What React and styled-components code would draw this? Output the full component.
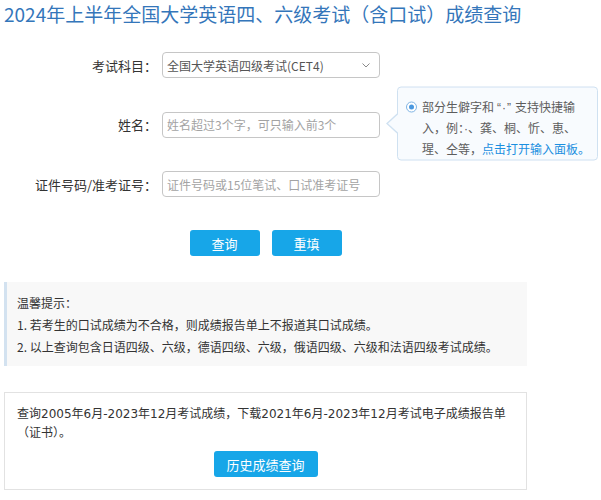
import React from "react";
import styled, { createGlobalStyle } from "styled-components";

const GlobalStyle = createGlobalStyle`
    body {
        margin: 0;
        background: #ffffff;
        font-family: "Noto Sans CJK SC", "Liberation Sans", sans-serif;
        color: #333333;
    }
`

const Page = styled.div`
    width: 523px;
    margin-left: 4px;
`

const Title = styled.h1`
    margin: 0;
    font-size: 19px;
    line-height: 28px;
    font-weight: normal;
    color: #3476ba;
    white-space: nowrap;
`

const Form = styled.div`
    display: flex;
    flex-direction: column;
    gap: 33.5px;
    margin-top: 24px;
`

const Row = styled.div`
    position: relative;
    display: flex;
    align-items: center;
    height: 26px;
`

const Label = styled.label`
    width: 153px;
    margin-right: 5px;
    text-align: right;
    font-size: 13px;
    color: #333333;
    white-space: nowrap;
`

const Field = styled.input`
    box-sizing: border-box;
    width: 218px;
    height: 26px;
    padding: 0 4px;
    border: 1px solid #c6c6c6;
    border-radius: 4px;
    font-family: "Noto Sans CJK SC", sans-serif;
    font-size: 12px;
    color: #555555;
    background: #ffffff;
    outline: none;

    &::placeholder {
        color: #a3a3a3;
    }
`

const SelectBox = styled.div`
    box-sizing: border-box;
    display: flex;
    align-items: center;
    justify-content: space-between;
    width: 218px;
    height: 26px;
    padding: 0 9px 0 4px;
    border: 1px solid #c6c6c6;
    border-radius: 4px;
    font-size: 12px;
    color: #555555;
`

const Hint = styled.div`
    position: absolute;
    left: 393px;
    top: 50%;
    transform: translateY(-52%);
    box-sizing: border-box;
    width: 201px;
    height: 74px;
    padding: 9px 6px 3px 8px;
    border: 1px solid #cfe1f1;
    border-radius: 4px;
    background: #f8fbfe;
    display: flex;
    align-items: flex-start;
    gap: 5px;

    &::before,
    &::after {
        content: "";
        position: absolute;
        top: 50%;
        width: 0;
        height: 0;
        border-style: solid;
        transform: translateY(-50%);
    }

    &::before {
        left: -12px;
        border-width: 11px 12px 11px 0;
        border-color: transparent #cfe1f1 transparent transparent;
    }

    &::after {
        left: -10px;
        border-width: 10px 11px 10px 0;
        border-color: transparent #f8fbfe transparent transparent;
    }
`

const Radio = styled.span`
    flex: none;
    box-sizing: border-box;
    width: 11px;
    height: 11px;
    margin-top: 5px;
    border: 1px solid #7fb4e4;
    border-radius: 50%;
    background: #ffffff;
    display: flex;
    align-items: center;
    justify-content: center;

    &::after {
        content: "";
        width: 5px;
        height: 5px;
        border-radius: 50%;
        background: #4a98df;
    }
`

const HintText = styled.p`
    margin: 0;
    font-size: 12px;
    line-height: 20px;
    color: #5d5d5d;
    white-space: nowrap;
`

const Dot = styled.span`
    font-family: "Liberation Sans", sans-serif;
    padding: 0 ${p => p.$pad || 0}px;
    letter-spacing: ${p => p.$spread || 0}px;
`

const HintLink = styled.a`
    color: #1b8fe0;
    text-decoration: none;
`

const Actions = styled.div`
    display: flex;
    justify-content: center;
    gap: 12px;
    margin-top: 33px;
`

const Button = styled.button`
    width: ${p => p.$width || 70}px;
    height: 26px;
    padding: 0;
    border: none;
    border-radius: 3px;
    background: #17a6e8;
    color: #ffffff;
    font-family: "Noto Sans CJK SC", sans-serif;
    font-size: 13px;
    cursor: pointer;
`

const Notice = styled.div`
    box-sizing: border-box;
    margin-top: 26px;
    height: 84px;
    padding: 10px 10px 8px 10px;
    border-left: 3px solid #d3e2f0;
    background: #f8f8f8;
    font-size: 12px;
    line-height: 22px;
    color: #333333;
`

const NoticeLine = styled.div`
    white-space: nowrap;
`

const History = styled.div`
    box-sizing: border-box;
    margin-top: 26px;
    height: 98px;
    padding: 12px 12px 12px 12px;
    border: 1px solid #e2e2e2;
    display: flex;
    flex-direction: column;
    align-items: center;
`

const HistoryText = styled.p`
    align-self: stretch;
    margin: 0 0 8px 0;
    font-family: "DejaVu Sans", "Noto Sans CJK SC", sans-serif;
    font-size: 12px;
    line-height: 19px;
    color: #333333;
`

const Chevron = () => (
    <svg width="8" height="5" viewBox="0 0 8 5" fill="none">
        <path d="M0.5 0.5 L4 4 L7.5 0.5" stroke="#8a8a8a" strokeWidth="1" />
    </svg>
)

const App = () => {
    return (
        <>
            <GlobalStyle />
            <Page>
                <Title>2024年上半年全国大学英语四、六级考试（含口试）成绩查询</Title>

                <Form>
                    <Row>
                        <Label>考试科目：</Label>
                        <SelectBox>
                            <span>全国大学英语四级考试(CET4)</span>
                            <Chevron />
                        </SelectBox>
                    </Row>
                    <Row>
                        <Label>姓名：</Label>
                        <Field placeholder="姓名超过3个字，可只输入前3个" />
                        <Hint>
                            <Radio />
                            <HintText>
                                部分生僻字和<Dot $pad={3} $spread={1}>“·”</Dot>支持快捷输<br />
                                入，例：<Dot>·</Dot>、龚、桐、忻、恵、<br />
                                瑆、仝等，<HintLink href="#">点击打开输入面板。</HintLink>
                            </HintText>
                        </Hint>
                    </Row>
                    <Row>
                        <Label>证件号码/准考证号：</Label>
                        <Field placeholder="证件号码或15位笔试、口试准考证号" />
                    </Row>
                </Form>

                <Actions>
                    <Button>查询</Button>
                    <Button>重填</Button>
                </Actions>

                <Notice>
                    <NoticeLine>温馨提示：</NoticeLine>
                    <NoticeLine>1. 若考生的口试成绩为不合格，则成绩报告单上不报道其口试成绩。</NoticeLine>
                    <NoticeLine>2. 以上查询包含日语四级、六级，德语四级、六级，俄语四级、六级和法语四级考试成绩。</NoticeLine>
                </Notice>

                <History>
                    <HistoryText>
                        查询2005年6月-2023年12月考试成绩，下载2021年6月-2023年12月考试电子成绩报告单（证书）。
                    </HistoryText>
                    <Button $width={104}>历史成绩查询</Button>
                </History>
            </Page>
        </>
    );
}

export default App
